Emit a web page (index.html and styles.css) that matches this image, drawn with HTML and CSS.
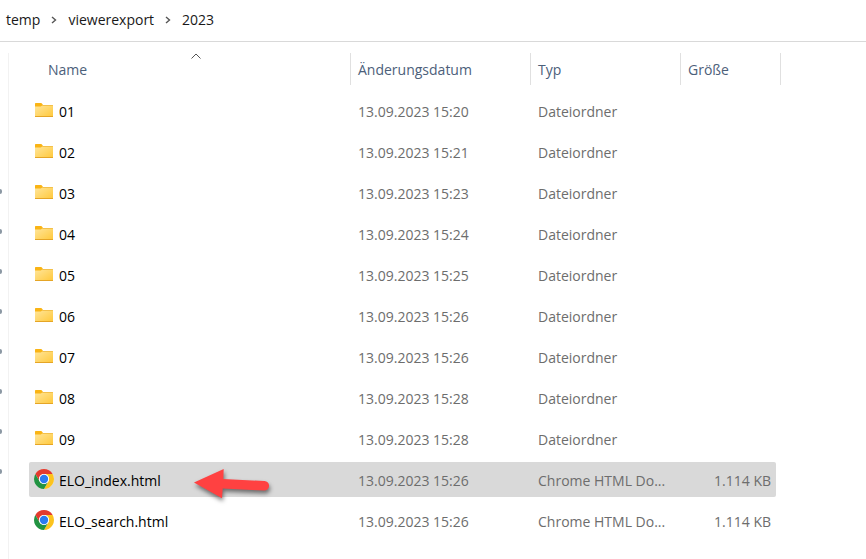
FILE: index.html
```html
<!DOCTYPE html>
<html lang="de">
<head>
    <meta charset="UTF-8">
    <meta name="viewport" content="width=device-width, initial-scale=1.0">
    <title>2023</title>
    <link rel="stylesheet" href="styles.css">
</head>
<body>
    <!-- shared icons -->
    <svg class="icon-defs" aria-hidden="true">
        <defs>
            <linearGradient id="folder-fill" x1="0" y1="0" x2="1" y2="1">
                <stop offset="0" stop-color="#ffe69c"/>
                <stop offset="1" stop-color="#ffc83a"/>
            </linearGradient>
            <symbol id="folder" viewBox="0 0 20 20">
                <path d="M1 3.6q0-.6.6-.6h5.3q.5 0 .8.3L9 5l-1 3H1z" fill="#fab414"/>
                <path d="M1 6.5h5.7q.5 0 .9-.4L8.500 5h9.900q.6 0 .6.6V16.400q0 .6-.6.6H1.600q-.6 0-.6-.6z" fill="url(#folder-fill)"/>
                <path d="M1 16h18v.4q0 .6-.6.6H1.600q-.6 0-.6-.6z" fill="#e5a526"/>
                <path d="M8.500 5h9.900q.6 0 .6.6V6H7.700z" fill="#f3c04a"/>
            </symbol>
            <symbol id="chrome" viewBox="0 0 48 48">
                <circle cx="24" cy="24" r="24" fill="#fff"/>
                <path d="M3.220 12A24 24 0 0 1 44.780 12H24A12 12 0 0 0 13.610 30z" fill="#e33b2e"/>
                <path d="M44.780 12A24 24 0 0 1 24 48L34.390 30A12 12 0 0 0 24 12z" fill="#fcc31e"/>
                <path d="M24 48A24 24 0 0 1 3.220 12L13.610 30A12 12 0 0 0 34.390 30z" fill="#229342"/>
                <circle cx="24" cy="24" r="12" fill="#fff"/>
                <circle cx="24" cy="24" r="10" fill="#2b7bf0"/>
            </symbol>
            <symbol id="chevron" viewBox="0 0 6 8">
                <path d="M1 1l3.500 3L1 7" fill="none" stroke="#555" stroke-width="1.400"/>
            </symbol>
        </defs>
    </svg>

    <nav class="breadcrumb" aria-label="Pfad">
        <a href="#temp">temp</a>
        <svg class="chevron" aria-hidden="true"><use href="#chevron"/></svg>
        <a href="#viewerexport">viewerexport</a>
        <svg class="chevron" aria-hidden="true"><use href="#chevron"/></svg>
        <a href="#2023">2023</a>
    </nav>

    <div class="explorer">
        <ul class="pins" aria-hidden="true">
            <li></li><li></li><li></li><li></li><li></li><li></li><li></li><li></li>
        </ul>

        <main class="files">
            <table class="file-table">
                <colgroup>
                    <col class="col-name">
                    <col class="col-date">
                    <col class="col-type">
                    <col class="col-size">
                </colgroup>
                <thead>
                    <tr>
                        <th class="name">
                            <button type="button">Name
                                <svg class="sort" viewBox="0 0 10 6" aria-hidden="true"><path d="M.5 5.500L5 1l4.500 4.500" fill="none" stroke="#555"/></svg>
                            </button>
                        </th>
                        <th><button type="button">Änderungsdatum</button></th>
                        <th><button type="button">Typ</button></th>
                        <th class="size"><button type="button">Größe</button></th>
                    </tr>
                </thead>
                <tbody>
                    <tr>
                        <td class="name"><a href="#01"><svg class="icon"><use href="#folder"/></svg>01</a></td>
                        <td>13.09.2023 15:20</td><td>Dateiordner</td><td class="size"></td>
                    </tr>
                    <tr>
                        <td class="name"><a href="#02"><svg class="icon"><use href="#folder"/></svg>02</a></td>
                        <td>13.09.2023 15:21</td><td>Dateiordner</td><td class="size"></td>
                    </tr>
                    <tr>
                        <td class="name"><a href="#03"><svg class="icon"><use href="#folder"/></svg>03</a></td>
                        <td>13.09.2023 15:23</td><td>Dateiordner</td><td class="size"></td>
                    </tr>
                    <tr>
                        <td class="name"><a href="#04"><svg class="icon"><use href="#folder"/></svg>04</a></td>
                        <td>13.09.2023 15:24</td><td>Dateiordner</td><td class="size"></td>
                    </tr>
                    <tr>
                        <td class="name"><a href="#05"><svg class="icon"><use href="#folder"/></svg>05</a></td>
                        <td>13.09.2023 15:25</td><td>Dateiordner</td><td class="size"></td>
                    </tr>
                    <tr>
                        <td class="name"><a href="#06"><svg class="icon"><use href="#folder"/></svg>06</a></td>
                        <td>13.09.2023 15:26</td><td>Dateiordner</td><td class="size"></td>
                    </tr>
                    <tr>
                        <td class="name"><a href="#07"><svg class="icon"><use href="#folder"/></svg>07</a></td>
                        <td>13.09.2023 15:26</td><td>Dateiordner</td><td class="size"></td>
                    </tr>
                    <tr>
                        <td class="name"><a href="#08"><svg class="icon"><use href="#folder"/></svg>08</a></td>
                        <td>13.09.2023 15:28</td><td>Dateiordner</td><td class="size"></td>
                    </tr>
                    <tr>
                        <td class="name"><a href="#09"><svg class="icon"><use href="#folder"/></svg>09</a></td>
                        <td>13.09.2023 15:28</td><td>Dateiordner</td><td class="size"></td>
                    </tr>
                    <tr class="selected">
                        <td class="name">
                            <a href="ELO_index.html"><svg class="icon"><use href="#chrome"/></svg>ELO_index.html</a>
                            <svg class="arrow" viewBox="0 0 90 50" aria-hidden="true">
                                <path d="M5 20.500L34.700 7l-.4 10L75.500 19a4.800 4.800 0 0 1-.4 9.600L33.700 26.400 33 36.300z" fill="#ff4141"/>
                            </svg>
                        </td>
                        <td>13.09.2023 15:26</td><td>Chrome HTML Do...</td><td class="size">1.114 KB</td>
                    </tr>
                    <tr>
                        <td class="name"><a href="ELO_search.html"><svg class="icon"><use href="#chrome"/></svg>ELO_search.html</a></td>
                        <td>13.09.2023 15:26</td><td>Chrome HTML Do...</td><td class="size">1.114 KB</td>
                    </tr>
                </tbody>
            </table>
        </main>
    </div>
</body>
</html>
```
FILE: styles.css
```css
* {
    box-sizing: border-box;
}

body {
    margin: 0;
    min-height: 100vh;
    display: flex;
    flex-direction: column;
    background-color: #fff;
    color: #191919;
    font-family: 'Open Sans', sans-serif;
    font-size: 14px;
    line-height: 20px;
}

a {
    color: inherit;
    text-decoration: none;
}

.icon-defs {
    position: absolute;
    width: 0;
    height: 0;
}

.breadcrumb {
    display: flex;
    align-items: center;
    gap: 11px;
    height: 42px;
    padding: 0 6px 2px;
    border-bottom: 1px solid #d9d9d9;
}

.chevron {
    width: 6px;
    height: 8px;
}

.explorer {
    flex: 1;
    display: flex;
    padding-top: 11px;
}

/* pins of the quick access list */
.pins {
    width: 8px;
    margin: 0;
    padding: 118px 0 0;
    list-style: none;
}

.pins li {
    display: flex;
    align-items: center;
    height: 40px;
}

.pins li::before {
    content: "";
    width: 2px;
    height: 5px;
    border-radius: 0 2px 2px 0;
    background-color: #8b98a3;
}

.files {
    flex: 1;
    min-width: 0;
    padding: 0 90px 15px 20px;
    border-left: 1px solid #f2f2f2;
}

.file-table {
    width: 100%;
    table-layout: fixed;
    border-collapse: separate;
    border-spacing: 0 6px;
    margin-top: -6px;
}

.col-date {
    width: 180px;
}

.col-type {
    width: 150px;
}

.col-size {
    width: 95px;
}

th {
    height: 34px;
    padding: 0;
    font-weight: 400;
    vertical-align: top;
}

th button {
    position: relative;
    display: block;
    width: 100%;
    height: 32px;
    padding: 2px 7px 0;
    border: none;
    border-right: 1px solid #e0e0e0;
    background: none;
    color: #4c607a;
    font: inherit;
    text-align: left;
}

th.name button {
    width: calc(100% - 12px);
    margin-left: 12px;
}

th.size button {
    width: calc(100% + 5px);
}

.sort {
    position: absolute;
    top: 0;
    left: 50%;
    width: 10px;
    height: 6px;
    margin-left: -5px;
}

td {
    height: 35px;
    padding: 2px 0 0 7px;
    color: #6d6d6d;
    white-space: nowrap;
}

td.name {
    position: relative;
    padding: 0 0 0 5px;
    color: #000;
}

td.name a {
    display: flex;
    align-items: center;
    gap: 5px;
    padding-top: 3px;
}

td.size {
    padding-right: 5px;
    text-align: right;
}

.icon {
    width: 20px;
    height: 20px;
    margin-top: -4px;
}

.selected td {
    background-color: #d9d9d9;
}

.selected td:first-child {
    border-radius: 2px 0 0 2px;
}

.selected td:last-child {
    border-radius: 0 2px 2px 0;
}

.arrow {
    position: absolute;
    top: 0;
    left: 160px;
    width: 90px;
    height: 50px;
    filter: drop-shadow(1px 3px 2px rgba(0, 0, 0, 0.5));
}
```
